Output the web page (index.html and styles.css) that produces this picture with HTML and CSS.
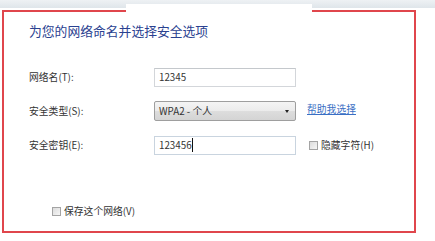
FILE: index.html
```html
<!DOCTYPE html>
<html lang="zh-CN">
<head>
<meta charset="utf-8">
<title>为您的网络命名并选择安全选项</title>
<link rel="stylesheet" href="styles.css">
</head>
<body>
<div class="topbar"></div>
<div class="frame">
  <h1 class="title">为您的网络命名并选择安全选项</h1>
  <div class="form">
    <label class="label">网络名(T):</label>
    <div class="input"><span>12345</span></div>
    <div class="side"></div>

    <label class="label">安全类型(S):</label>
    <div class="select"><span>WPA2 - 个人</span><span class="arrow"></span></div>
    <a class="side link" href="#">帮助我选择</a>

    <label class="label">安全密钥(E):</label>
    <div class="input focus"><span class="caret">123456</span></div>
    <div class="side check"><span class="box"></span><span>隐藏字符(H)</span></div>
  </div>
  <div class="check save"><span class="box"></span><span>保存这个网络(V)</span></div>
</div>
<div class="mark"></div>
</body>
</html>
```

FILE: styles.css
```css
html, body {
  margin: 0;
  padding: 0;
  background: #ffffff;
}
body {
  position: relative;
  width: 435px;
  height: 241px;
  overflow: hidden;
  font-family: "Noto Sans CJK SC", "Noto Sans", sans-serif;
  color: #2a2a2a;
}
.topbar {
  height: 8px;
  background: linear-gradient(to bottom, #eef1f4, #dfe5ea);
}
.frame {
  box-sizing: border-box;
  margin: 2px 0 0 2px;
  width: 414px;
  height: 223px;
  border: 2.5px solid #e0464c;
  padding: 11px 0 0 25px;
}
.title {
  margin: 0;
  font-size: 12.8px;
  line-height: 16px;
  font-weight: normal;
  color: #2a4190;
}
.form {
  display: grid;
  grid-template-columns: 125px 142px auto;
  grid-auto-rows: 20px;
  row-gap: 14px;
  margin-top: 28px;
  align-items: center;
}
.side {
  margin-left: 11px;
}
.label {
  font-size: 9.8px;
  line-height: 14px;
  color: #333;
}
.input {
  box-sizing: border-box;
  height: 19px;
  border: 1px solid #d3d6da;
  border-top-color: #c4c8cc;
  background: #fff;
  font-size: 9.8px;
  line-height: 17px;
  padding-left: 4px;
  color: #333;
}
.input.focus {
  border-color: #c9d4df;
}
.caret {
  border-right: 1px solid #111;
}
.select {
  box-sizing: border-box;
  height: 20px;
  border: 1px solid #9e9e9e;
  border-radius: 2px;
  background: linear-gradient(to bottom, #f4f4f4 0%, #ebebeb 50%, #dddddd 51%, #d4d4d4 100%);
  font-size: 9.8px;
  line-height: 18px;
  padding-left: 4px;
  padding-right: 6px;
  display: flex;
  align-items: center;
  justify-content: space-between;
  color: #333;
}
.arrow {
  width: 0;
  height: 0;
  border-left: 2.5px solid transparent;
  border-right: 2.5px solid transparent;
  border-top: 3px solid #222;
}
.link {
  font-size: 9.8px;
  color: #3a6fc4;
  text-decoration: underline;
  line-height: 14px;
  justify-self: start;
  margin-top: -4px;
}
.check {
  display: flex;
  align-items: center;
  gap: 3px;
  font-size: 9.8px;
  line-height: 14px;
  color: #333;
}
.form .check {
  margin-left: 13px;
}
.box {
  box-sizing: border-box;
  width: 9px;
  height: 9px;
  border: 1px solid #a4a4a4;
  background: linear-gradient(135deg, #dcdcdc, #f6f6f6);
}
.save {
  margin-top: 49px;
  margin-left: 23px;
}
.mark {
  position: absolute;
  left: 126px;
  top: 4px;
  width: 186px;
  height: 10px;
  background: #ffffff;
}
```
